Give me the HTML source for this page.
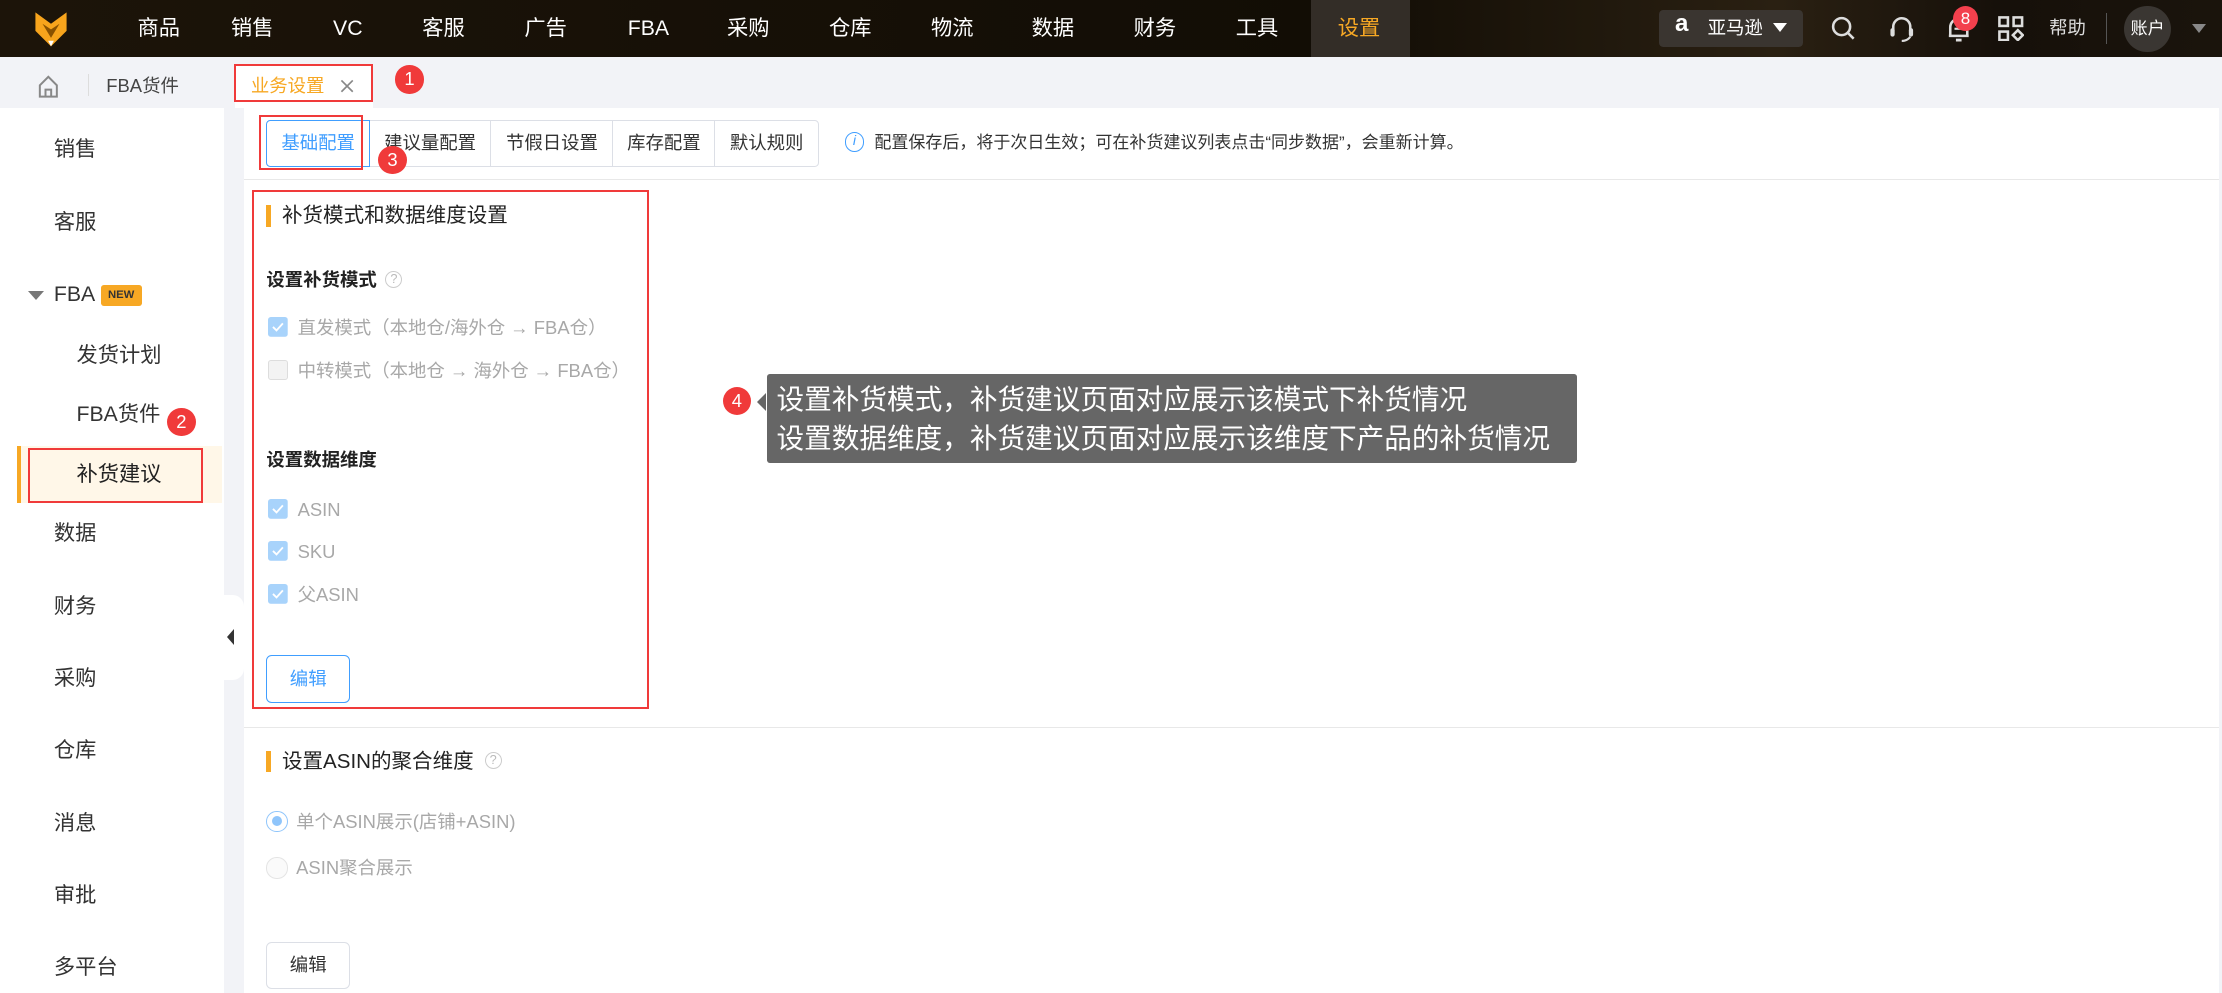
<!DOCTYPE html>
<html><head><meta charset="utf-8"><style>
*{box-sizing:border-box;margin:0;padding:0}
html,body{width:2222px;height:993px;overflow:hidden;background:#f2f3f7}
#r{zoom:1.41709;width:1568px;height:701px;position:relative;font-family:"Liberation Sans","Noto Sans CJK SC",sans-serif;color:#333;line-height:1.2}
.a{position:absolute;white-space:nowrap}
.top{left:0;top:0;width:1568px;height:40px;background:linear-gradient(90deg,#1c1409 0%,#120d05 60%,#2a2012 80%,#16100a 90%,#1a140c 100%)}
.nav{color:#fff;font-size:15px;top:0;height:40px;line-height:40px}
.sb{left:0;top:76px;width:158px;height:625px;background:#fff}
.si{font-size:15px;color:#333}
.ct{left:172px;top:76px;width:1394px;height:625px;background:#fff}
.rb{border:2px solid #f03a3a}
.num{width:20px;height:20px;border-radius:50%;background:#f03a3a;color:#fff;font-size:13px;text-align:center;line-height:20px}
.bg{top:85px;height:33px;border:1px solid #dcdfe6;font-size:13px;line-height:31px;text-align:center;background:#fff}
.cb{width:14px;height:14px;border-radius:2px;background:#a8d3fb}
.gt{font-size:13px;color:#a8a8a8}
.ob{width:3px;height:15px;background:#f7a824}
</style></head><body><div id="r">
<div class="a top"></div>
<svg class="a" style="left:24px;top:8px" width="24" height="26" viewBox="0 0 24 26"><path d="M1 1 L12 9 L23 1 L23 14 L12 25 L1 14Z" fill="#f7a41c"/><path d="M6 9 L12 13 L18 9 L12 19Z" fill="#8a5200"/><path d="M10 21 L12 25 L14 21Z" fill="#fff"/></svg>
<div class="a nav" style="left:97px">商品</div><div class="a nav" style="left:163px">销售</div><div class="a nav" style="left:235px">VC</div><div class="a nav" style="left:298px">客服</div><div class="a nav" style="left:370px">广告</div><div class="a nav" style="left:443px">FBA</div><div class="a nav" style="left:513px">采购</div><div class="a nav" style="left:585px">仓库</div><div class="a nav" style="left:657px">物流</div><div class="a nav" style="left:728px">数据</div><div class="a nav" style="left:800px">财务</div><div class="a nav" style="left:872px">工具</div>
<div class="a" style="left:925px;top:0;width:70px;height:40px;background:#332d27"></div><div class="a nav" style="left:944px;color:#f7a824">设置</div>
<div class="a" style="left:1171px;top:7px;width:101px;height:26px;border-radius:3px;background:#3a3530"></div>
<div class="a" style="left:1182px;top:7px;color:#fff;font-size:17px;font-weight:bold">a</div>
<div class="a" style="left:1205px;top:12px;color:#fff;font-size:13px">亚马逊</div>
<div class="a" style="left:1251px;top:16px;border:5px solid transparent;border-top:7px solid #fff;border-bottom:0"></div>
<svg class="a" style="left:1292px;top:11px" width="18" height="18"><circle cx="7.5" cy="7.5" r="6" stroke="#ddd" stroke-width="1.8" fill="none"/><path d="M12 12 L16 16" stroke="#ddd" stroke-width="1.8"/></svg>
<svg class="a" style="left:1333px;top:10px" width="18" height="20"><path d="M3 12 V9 a6 6 0 0 1 12 0 V12" stroke="#ddd" stroke-width="1.8" fill="none"/><rect x="1" y="10" width="3" height="6" rx="1.5" fill="#ddd"/><rect x="14" y="10" width="3" height="6" rx="1.5" fill="#ddd"/><path d="M15 16 Q13 19 9 19" stroke="#ddd" stroke-width="1.5" fill="none"/></svg>
<svg class="a" style="left:1373px;top:11px" width="18" height="20"><path d="M3 14 V8 a6 6 0 0 1 12 0 V14 H2 H16" stroke="#ddd" stroke-width="1.8" fill="none"/><path d="M7 17 h4" stroke="#ddd" stroke-width="2"/><path d="M6 9 h5" stroke="#ddd" stroke-width="1.5"/></svg>
<div class="a num" style="left:1378px;top:4px;width:18px;height:18px;line-height:18px;background:#f3404d;font-size:12px">8</div>
<svg class="a" style="left:1410px;top:11px" width="18" height="18"><rect x="1" y="1" width="6" height="6" stroke="#ddd" stroke-width="1.8" fill="none"/><rect x="11" y="1" width="6" height="6" stroke="#ddd" stroke-width="1.8" fill="none"/><rect x="1" y="11" width="6" height="6" stroke="#ddd" stroke-width="1.8" fill="none"/><path d="M14 10 L17.5 13.5 L14 17 L10.5 13.5Z" stroke="#ddd" stroke-width="1.8" fill="none"/></svg>
<div class="a" style="left:1446px;top:12px;color:#ddd;font-size:13px">帮助</div>
<div class="a" style="left:1486px;top:9px;width:1px;height:22px;background:#555"></div>
<div class="a" style="left:1499px;top:4px;width:33px;height:33px;border-radius:50%;background:#3a3632;color:#fff;font-size:12px;line-height:33px;text-align:center">账户</div>
<div class="a" style="left:1547px;top:17px;border:5px solid transparent;border-top:7px solid #888;border-bottom:0"></div>
<svg class="a" style="left:26px;top:52px" width="16" height="18"><path d="M2 8 L8 2 L14 8 V16 H2Z M6 16 V11 H10 V16" stroke="#888" stroke-width="1.4" fill="none"/></svg>
<div class="a" style="left:62px;top:52px;width:1px;height:16px;background:#ddd"></div>
<div class="a" style="left:75px;top:53px;font-size:13px;color:#444">FBA货件</div>
<div class="a" style="left:166px;top:45px;width:97px;height:31px;background:#fff"></div>
<div class="a rb" style="left:165px;top:45px;width:98px;height:27px"></div>
<div class="a" style="left:177px;top:53px;font-size:13px;color:#f7a824">业务设置</div>
<svg class="a" style="left:240px;top:56px" width="10" height="10"><path d="M1 1 L9 9 M9 1 L1 9" stroke="#888" stroke-width="1.2"/></svg>
<div class="a num" style="left:279px;top:46px">1</div>
<div class="a sb"></div>
<div class="a si" style="left:38px;top:97px">销售</div>
<div class="a si" style="left:38px;top:148px">客服</div>
<div class="a" style="left:20px;top:205px;border:6px solid transparent;border-top:7px solid #777;border-bottom:0"></div>
<div class="a si" style="left:38px;top:199px">FBA</div>
<div class="a" style="left:71px;top:201px;width:29px;height:15px;background:#f7a824;border-radius:2px;font-size:8px;color:#333;text-align:center;line-height:15px;font-weight:bold">NEW</div>
<div class="a si" style="left:54px;top:242px">发货计划</div>
<div class="a si" style="left:54px;top:284px">FBA货件</div>
<div class="a num" style="left:118px;top:288px">2</div>
<div class="a" style="left:12px;top:315px;width:145px;height:40px;background:#fff7e8;border-left:3px solid #f7a824"></div>
<div class="a rb" style="left:20px;top:316px;width:123px;height:39px"></div>
<div class="a si" style="left:54px;top:326px;color:#222">补货建议</div>
<div class="a si" style="left:38px;top:368px">数据</div><div class="a si" style="left:38px;top:419px">财务</div><div class="a si" style="left:38px;top:470px">采购</div><div class="a si" style="left:38px;top:521px">仓库</div><div class="a si" style="left:38px;top:572px">消息</div><div class="a si" style="left:38px;top:623px">审批</div><div class="a si" style="left:38px;top:674px">多平台</div>
<div class="a" style="left:158px;top:420px;width:14px;height:60px;background:#fff;border-radius:0 8px 8px 0"></div>
<div class="a" style="left:160px;top:444px;border:4px solid transparent;border-right:5px solid #333;border-left:0;border-top-width:6px;border-bottom-width:6px"></div>
<div class="a ct"></div>
<div class="a bg" style="left:188px;width:73px;border-color:#409eff;color:#409eff;border-radius:3px 0 0 3px;z-index:2">基础配置</div>
<div class="a bg" style="left:260px;width:87px">建议量配置</div>
<div class="a bg" style="left:346px;width:87px">节假日设置</div>
<div class="a bg" style="left:432px;width:73px">库存配置</div>
<div class="a bg" style="left:504px;width:74px;border-radius:0 3px 3px 0">默认规则</div>
<div class="a rb" style="left:183px;top:81px;width:73px;height:39px;z-index:3"></div>
<div class="a num" style="left:267px;top:103px;z-index:3">3</div>
<div class="a" style="left:596px;top:93px;width:14px;height:14px;border:1px solid #409eff;border-radius:50%;color:#409eff;font-size:10px;text-align:center;line-height:12px;font-style:italic">i</div>
<div class="a" style="left:617px;top:94px;font-size:12px;color:#333">配置保存后，将于次日生效；可在补货建议列表点击“同步数据”，会重新计算。</div>
<div class="a" style="left:172px;top:126px;width:1394px;height:1px;background:#e8e8e8"></div>
<div class="a rb" style="left:178px;top:134px;width:280px;height:366px"></div>
<div class="a ob" style="left:188px;top:145px"></div>
<div class="a" style="left:199px;top:144px;font-size:14.5px;color:#222">补货模式和数据维度设置</div>
<div class="a" style="left:188px;top:190px;font-size:13px;font-weight:bold;color:#222">设置补货模式</div>
<div class="a" style="left:272px;top:191px;width:12px;height:12px;border:1px solid #ccc;border-radius:50%;font-size:9px;color:#bbb;text-align:center;line-height:10px">?</div>
<svg width="0" height="0" style="position:absolute"><defs><symbol id="ck" viewBox="0 0 14 14"><rect width="14" height="14" rx="2" fill="#a8d3fb"/><path d="M3.5 7 L6 9.5 L10.5 4.5" stroke="#fff" stroke-width="1.3" fill="none"/></symbol></defs></svg>
<svg class="a" style="left:189px;top:224px" width="14" height="14"><use href="#ck"/></svg><div class="a gt" style="left:210px;top:224px">直发模式（本地仓/海外仓 → FBA仓）</div>
<div class="a cb" style="left:189px;top:254px;background:#f3f3f3;border:1px solid #ddd"></div><div class="a gt" style="left:210px;top:254px">中转模式（本地仓 → 海外仓 → FBA仓）</div>
<div class="a" style="left:188px;top:317px;font-size:13px;font-weight:bold;color:#222">设置数据维度</div>
<svg class="a" style="left:189px;top:352px" width="14" height="14"><use href="#ck"/></svg><div class="a gt" style="left:210px;top:352px">ASIN</div>
<svg class="a" style="left:189px;top:382px" width="14" height="14"><use href="#ck"/></svg><div class="a gt" style="left:210px;top:382px">SKU</div>
<svg class="a" style="left:189px;top:412px" width="14" height="14"><use href="#ck"/></svg><div class="a gt" style="left:210px;top:412px">父ASIN</div>
<div class="a" style="left:188px;top:462px;width:59px;height:34px;border:1px solid #409eff;border-radius:4px;color:#409eff;font-size:13px;text-align:center;line-height:32px">编辑</div>
<div class="a" style="left:172px;top:513px;width:1394px;height:1px;background:#e8e8e8"></div>
<div class="a ob" style="left:188px;top:530px"></div>
<div class="a" style="left:199px;top:529px;font-size:14.5px;color:#222">设置ASIN的聚合维度</div>
<div class="a" style="left:342px;top:531px;width:12px;height:12px;border:1px solid #ccc;border-radius:50%;font-size:9px;color:#bbb;text-align:center;line-height:10px">?</div>
<div class="a" style="left:188px;top:572px;width:15px;height:15px;border:1px solid #8fc5fb;border-radius:50%;background:#fff"></div><div class="a" style="left:192px;top:576px;width:7px;height:7px;border-radius:50%;background:#8fc5fb"></div>
<div class="a gt" style="left:209px;top:572px">单个ASIN展示(店铺+ASIN)</div>
<div class="a" style="left:188px;top:605px;width:15px;height:15px;border:1px solid #e4e4e4;border-radius:50%;background:#fafafa"></div>
<div class="a gt" style="left:209px;top:605px">ASIN聚合展示</div>
<div class="a" style="left:188px;top:665px;width:59px;height:33px;border:1px solid #dcdfe6;border-radius:4px;color:#333;font-size:13px;text-align:center;line-height:31px">编辑</div>
<div class="a num" style="left:510px;top:273px">4</div>
<div class="a" style="left:534px;top:277px;border:7px solid transparent;border-right:7px solid #666;border-left:0"></div>
<div class="a" style="left:541px;top:264px;width:572px;height:63px;background:#666;border-radius:2px;color:#fff;font-size:19.5px;line-height:28px;padding:4px 0 0 7px">设置补货模式，补货建议页面对应展示该模式下补货情况<br>设置数据维度，补货建议页面对应展示该维度下产品的补货情况</div>
</div></body></html>
